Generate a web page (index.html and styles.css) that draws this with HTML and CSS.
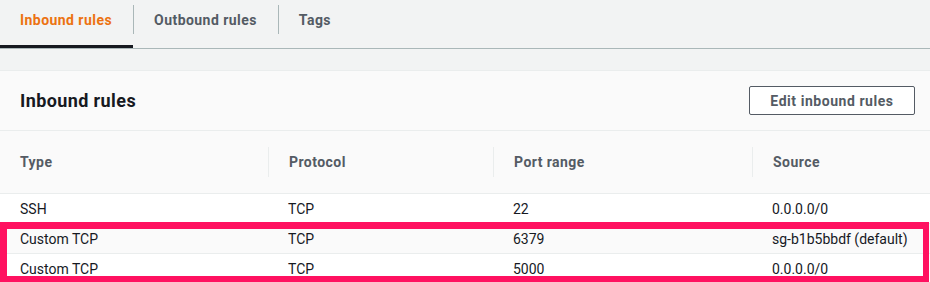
FILE: index.html
```html
<!DOCTYPE html>
<html lang="en">
<head>
	<meta charset="UTF-8">
	<title>Security group rules</title>
	<link rel="stylesheet" href="styles.css">
</head>
<body>

<div class="tabs">
	<div class="tab active">Inbound rules</div>
	<span class="sep"></span>
	<div class="tab">Outbound rules</div>
	<span class="sep"></span>
	<div class="tab">Tags</div>
</div>

<div class="card">
	<div class="card-header">
		<h2>Inbound rules</h2>
		<button type="button">Edit inbound rules</button>
	</div>
	<div class="rules">
		<div class="row head">
			<div>Type</div>
			<div class="col">Protocol</div>
			<div class="col">Port range</div>
			<div class="col">Source</div>
		</div>
		<div class="row">
			<div>SSH</div>
			<div>TCP</div>
			<div>22</div>
			<div>0.0.0.0/0</div>
		</div>
		<div class="row shade">
			<div>Custom TCP</div>
			<div>TCP</div>
			<div>6379</div>
			<div>sg-b1b5bbdf (default)</div>
		</div>
		<div class="row">
			<div>Custom TCP</div>
			<div>TCP</div>
			<div>5000</div>
			<div>0.0.0.0/0</div>
		</div>
		<div class="highlight"></div>
	</div>
</div>

</body>
</html>
```

FILE: styles.css
```css
body {
	margin: 0;
	background: #f2f3f3;
	font-family: Roboto, "Liberation Sans", sans-serif;
	font-size: 14px;
	color: #16191f;
}
.tabs {
	display: flex;
	height: 48px;
	border-bottom: 1px solid #aab7b8;
}
.tab {
	padding: 11px 21px 0 20px;
	line-height: 18px;
	font-weight: bold;
	letter-spacing: 0.45px;
	color: #545b64;
}
.tab.active {
	color: #ec7211;
	border-bottom: 3px solid #16191f;
	height: 34px;
}
.sep {
	width: 1px;
	height: 29px;
	margin-top: 5px;
	background: #aab7b8;
}
.card {
	margin-top: 21px;
	background: #fafafa;
	border-top: 1px solid #eaeded;
}
.card-header {
	display: flex;
	align-items: center;
	justify-content: space-between;
	height: 59px;
	padding: 0 15px 0 20px;
	border-bottom: 1px solid #eaeded;
}
h2 {
	margin: 0;
	font-size: 18px;
	font-weight: bold;
	letter-spacing: 0.4px;
}
button {
	width: 166px;
	height: 29px;
	border: 1px solid #545b64;
	border-radius: 2px;
	background: #fff;
	color: #545b64;
	font: bold 14px Roboto, "Liberation Sans", sans-serif;
	letter-spacing: 0.55px;
}
.rules {
	position: relative;
}
.row {
	display: grid;
	grid-template-columns: 268px 225px 259px 1fr;
	align-items: center;
	height: 29px;
	background: #fff;
	border-bottom: 1px solid #eaeded;
}
.row > div {
	padding-left: 20px;
}
.row.head {
	height: 62px;
	background: #fafafa;
	font-weight: bold;
	letter-spacing: 0.45px;
	color: #545b64;
}
.row.head .col {
	border-left: 1px solid #eaeded;
	line-height: 30px;
}
.row.shade {
	background: #fafafa;
}
.highlight {
	position: absolute;
	left: 0;
	top: 91px;
	width: 916px;
	height: 47px;
	border: 7px solid #ff1160;
	border-right-width: 6px;
	border-bottom-width: 6px;
}
```
